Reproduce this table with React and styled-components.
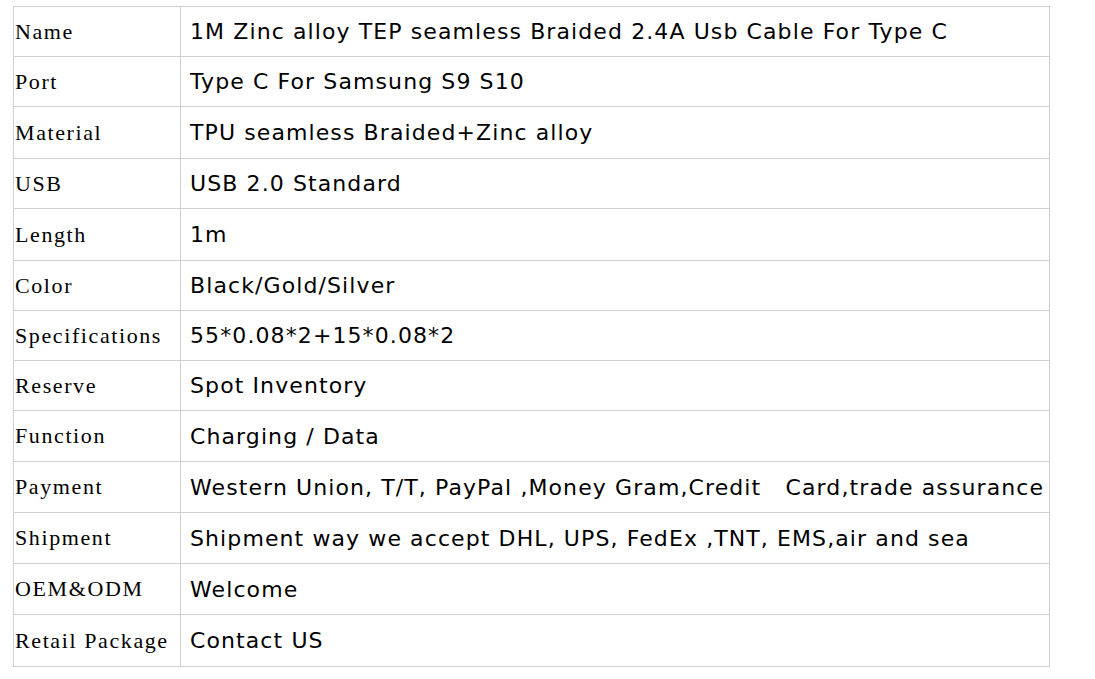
import React from "react";
import styled, { createGlobalStyle } from "styled-components";

const rows = [
  ["Name", "1M Zinc alloy TEP seamless Braided 2.4A Usb Cable For Type C", 50],
  ["Port", "Type C For Samsung S9 S10", 50],
  ["Material", "TPU seamless Braided+Zinc alloy", 52],
  ["USB", "USB 2.0 Standard", 50],
  ["Length", "1m", 52],
  ["Color", "Black/Gold/Silver", 50],
  ["Specifications", "55*0.08*2+15*0.08*2", 50],
  ["Reserve", "Spot Inventory", 50],
  ["Function", "Charging / Data", 51],
  ["Payment", "Western Union, T/T, PayPal ,Money Gram,Credit \u00a0 Card,trade assurance", 51],
  ["Shipment", "Shipment way we accept DHL, UPS, FedEx ,TNT, EMS,air and sea", 51],
  ["OEM&ODM", "Welcome", 51],
  ["Retail Package", "Contact US", 52],
];

const GlobalStyle = createGlobalStyle`
  body {
    margin: 0;
    background: #ffffff;
  }
`;

const Page = styled.div`
  padding: 6px 0 0 13px;
`;

const SpecTable = styled.table`
  border-collapse: collapse;
  width: 1037px;
  table-layout: fixed;
`;

const Row = styled.tr`
  height: ${(p) => p.$h}px;
`;

const Label = styled.td`
  width: 165px;
  border: 1px solid #cfcfcf;
  padding: 0 0 0 1px;
  font-family: "Liberation Serif", serif;
  font-size: 22px;
  letter-spacing: 1.6px;
  color: #000;
  white-space: nowrap;
  vertical-align: middle;
`;

const Value = styled.td`
  border: 1px solid #cfcfcf;
  padding: 0 0 0 9px;
  font-family: "DejaVu Sans", Verdana, sans-serif;
  font-size: 22px;
  letter-spacing: 1.1px;
  color: #000;
  white-space: nowrap;
  vertical-align: middle;
`;

export default function App() {
  return (
    <Page>
      <GlobalStyle />
      <SpecTable>
        <tbody>
          {rows.map(([label, value, h]) => (
            <Row key={label} $h={h}>
              <Label>{label}</Label>
              <Value>{value}</Value>
            </Row>
          ))}
        </tbody>
      </SpecTable>
    </Page>
  );
}
